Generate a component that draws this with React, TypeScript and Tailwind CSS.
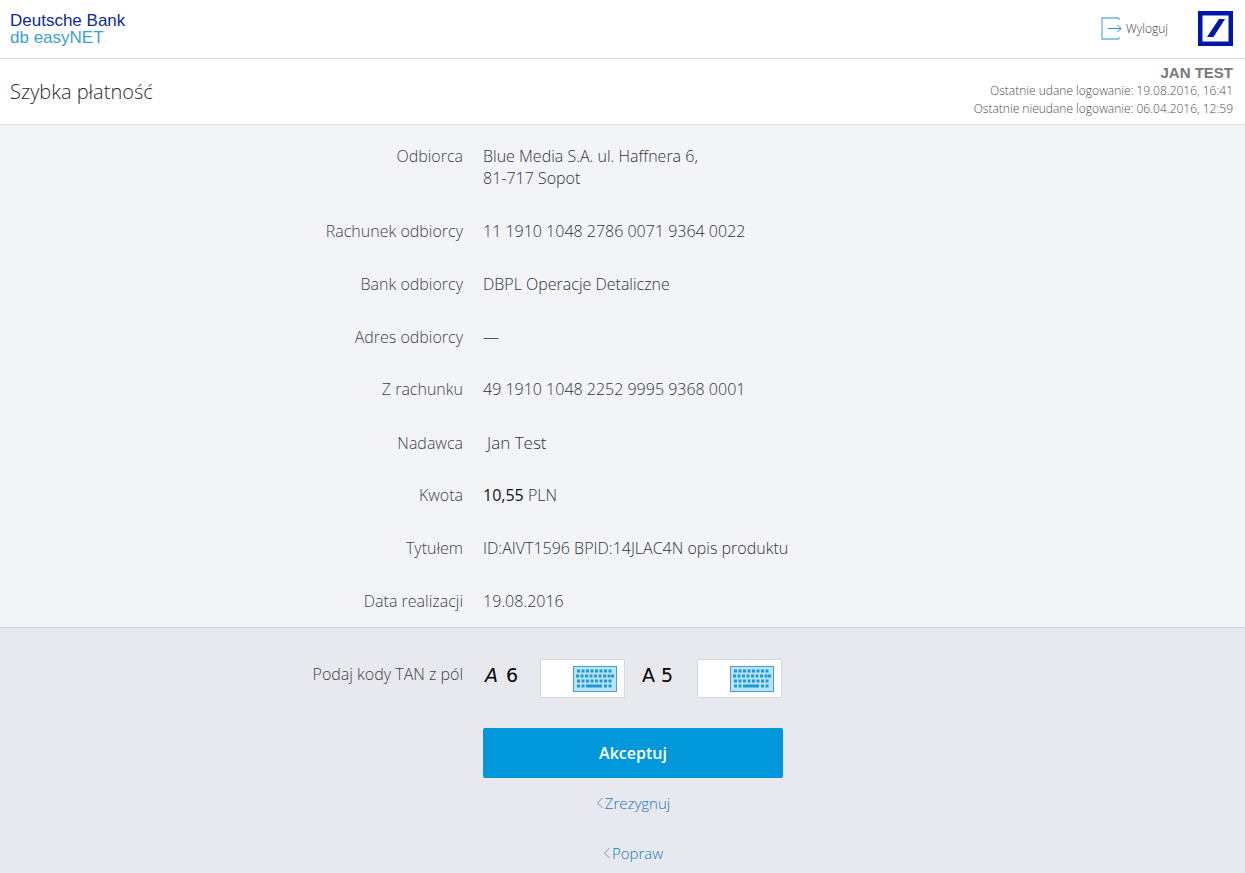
const sans = 'font-["Open_Sans",sans-serif]';

function KeyboardIcon() {
  const rows = [
    { y: 3.5, xs: [4, 8.5, 13, 17.5, 22, 26.5, 31, 35.5] },
    { y: 8.5, xs: [3, 7.5, 12, 16.5, 21, 25.5, 30, 34.5, 38] },
    { y: 13.5, xs: [4, 8.5, 13, 17.5, 22, 26.5, 31, 35.5] },
  ];
  return (
    <svg width="44" height="26" viewBox="0 0 44 26" aria-hidden="true">
      <rect x="0.5" y="0.5" width="43" height="25" fill="#b9e4f7" stroke="#4b9cc9" />
      {rows.map((r) =>
        r.xs.map((x) => <rect key={`${r.y}-${x}`} x={x} y={r.y} width="3" height="3" fill="#1f98d6" />),
      )}
      <rect x="4" y="18.500" width="3" height="3" fill="#1f98d6" />
      <rect x="8.500" y="18.500" width="3" height="3" fill="#1f98d6" />
      <rect x="13" y="18.500" width="16" height="3" fill="#1f98d6" />
      <rect x="31" y="18.500" width="3" height="3" fill="#1f98d6" />
      <rect x="35.500" y="18.500" width="3" height="3" fill="#1f98d6" />
    </svg>
  );
}

function LogoutIcon() {
  return (
    <svg width="21" height="23" viewBox="0 0 21 23" fill="none" aria-hidden="true">
      <path d="M18 1H1v21h17" stroke="#6fb0e0" strokeWidth="1.3" />
      <path d="M18 1v2M18 20v2" stroke="#6fb0e0" strokeWidth="1.3" />
      <path d="M7 11.500h13M16.500 8l3.500 3.500-3.500 3.500" stroke="#2f8fd0" strokeWidth="1" />
    </svg>
  );
}

function DbLogo() {
  return (
    <svg width="35" height="35" viewBox="0 0 35 35" aria-hidden="true">
      <rect width="35" height="35" fill="#0018a8" />
      <rect x="4.500" y="4.500" width="26" height="26" fill="#fff" />
      <path d="M21 8h6L15.500 26H9z" fill="#0018a8" />
    </svg>
  );
}

function Chevron() {
  return (
    <svg width="8" height="12" viewBox="0 0 8 12" fill="none" className="mr-[1px]" aria-hidden="true">
      <path d="M6.500 1 1.500 6l5 5" stroke="#5a9fd0" strokeWidth="1" />
    </svg>
  );
}

function Row({ label, mb = 'mb-[31px]', children }: { label: string; mb?: string; children: React.ReactNode }) {
  return (
    <div className={`flex ${mb} text-[16px] font-light leading-[22px]`}>
      <div className="w-[463px] shrink-0 text-right text-[#3f4246]">{label}</div>
      <div className="ml-5 text-[#2f3236]">{children}</div>
    </div>
  );
}

function TanField() {
  return (
    <div className="flex h-[39px] w-[85px] items-center justify-end rounded-[1px] border border-[#d5d8de] bg-white pr-[7px]">
      <KeyboardIcon />
    </div>
  );
}

export default function App() {
  return (
    <div className={`${sans} h-[873px] w-[1245px] overflow-hidden bg-white`}>
      <header className="flex h-[59px] items-start justify-between border-b border-[#d9dbe0] pl-[10px] pr-[12px]">
        <div className="pt-[12px] font-['Liberation_Sans',sans-serif] text-[17px] leading-[17px]">
          <div className="text-[#0c2a96]">Deutsche Bank</div>
          <div className="text-[#3d9fd6]">db easyNET</div>
        </div>
        <div className="flex items-center pt-[11px]">
          <LogoutIcon />
          <span className="ml-[4px] mr-[30px] text-[12px] font-light text-[#3f4246]">Wyloguj</span>
          <DbLogo />
        </div>
      </header>

      <div className="flex h-[66px] justify-between border-b border-[#dfe1e6] pl-[10px] pr-[12px]">
        <h1 className="pt-[18px] text-[20px] font-light leading-[30px] text-[#2a2a2a]">Szybka płatność</h1>
        <div className="pt-[4px] text-right text-[12px] font-light leading-[18px] text-[#4a4d52]">
          <div className="font-['Liberation_Sans',sans-serif] text-[15px] font-bold leading-[19px] text-[#77797d]">JAN TEST</div>
          <div>Ostatnie udane logowanie: 19.08.2016, 16:41</div>
          <div>Ostatnie nieudane logowanie: 06.04.2016, 12:59</div>
        </div>
      </div>

      <main className="h-[503px] border-b border-[#cfd2d8] bg-[#f2f4f8] pt-[20px]">
        <Row label="Odbiorca">
          Blue Media S.A. ul. Haffnera 6,
          <br />
          81-717 Sopot
        </Row>
        <Row label="Rachunek odbiorcy">11 1910 1048 2786 0071 9364 0022</Row>
        <Row label="Bank odbiorcy">DBPL Operacje Detaliczne</Row>
        <Row label="Adres odbiorcy" mb="mb-[30px]">—</Row>
        <Row label="Z rachunku" mb="mb-[32px]">49 1910 1048 2252 9995 9368 0001</Row>
        <Row label="Nadawca" mb="mb-[30px]">
          <span className="ml-1 text-[17px]">Jan Test</span>
        </Row>
        <Row label="Kwota">
          <span className="font-normal text-[#111]">10,55</span> PLN
        </Row>
        <Row label="Tytułem">ID:AIVT1596 BPID:14JLAC4N opis produktu</Row>
        <Row label="Data realizacji" mb="mb-0">19.08.2016</Row>
      </main>

      <section className="h-[245px] bg-[#e7e9ef] pt-[31px]">
        <div className="flex items-start">
          <div className="w-[463px] shrink-0 pt-[4px] text-right text-[16px] font-light leading-[22px] text-[#3f4246]">Podaj kody TAN z pól</div>
          <div className="ml-5 flex items-center font-['DejaVu_Sans',sans-serif] text-[19px] text-black">
            <span className="mb-[7px] ml-[2px] w-[21px] italic">A</span>
            <span className="mb-[7px] w-[34px]">6</span>
            <TanField />
            <span className="mb-[7px] ml-[17px] w-[19px]">A</span>
            <span className="mb-[7px] w-[36px]">5</span>
            <TanField />
          </div>
        </div>

        <div className="ml-[483px] mt-[30px] flex w-[300px] flex-col items-center">
          <button type="button" className="h-[50px] w-full rounded-[2px] bg-[#0098db] text-[16px] font-semibold text-white">
            Akceptuj
          </button>
          <a className="mt-[14px] flex items-center text-[15px] font-light leading-[22px] text-[#1a78bb]">
            <Chevron />
            Zrezygnuj
          </a>
          <a className="mt-[28px] flex items-center text-[15px] font-light leading-[22px] text-[#1a78bb]">
            <Chevron />
            Popraw
          </a>
        </div>
      </section>
    </div>
  );
}
